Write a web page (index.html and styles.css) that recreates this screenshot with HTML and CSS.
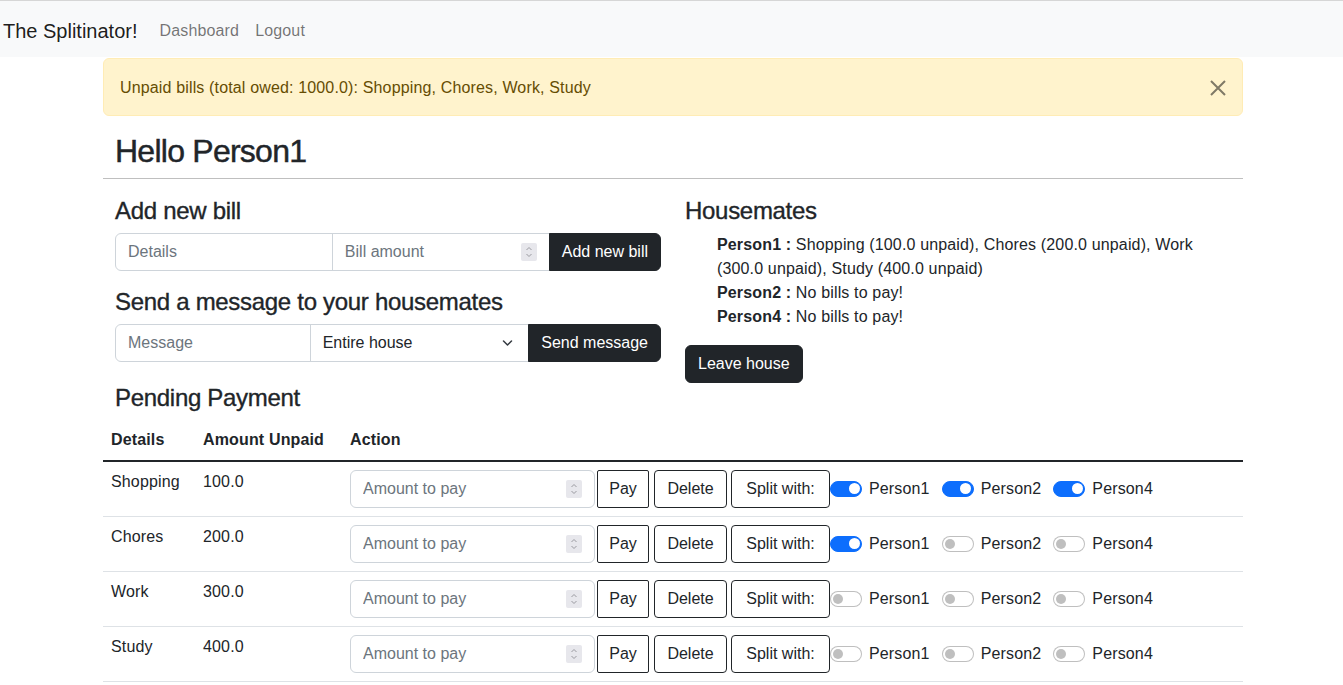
FILE: index.html
```html
<!DOCTYPE html>
<html lang="en">
<head>
<meta charset="utf-8">
<title>The Splitinator!</title>
<link rel="stylesheet" href="styles.css">
</head>
<body>
<nav class="navbar">
  <a class="brand" href="#">The Splitinator!</a>
  <a class="nav-link" href="#">Dashboard</a>
  <a class="nav-link" href="#">Logout</a>
</nav>
<main class="container">
  <div class="alert">
    <span>Unpaid bills (total owed: 1000.0): Shopping, Chores, Work, Study</span>
    <button class="btn-close" type="button" aria-label="Close">
      <svg width="16" height="16" viewBox="0 0 16 16"><path d="M1 1L15 15M15 1L1 15" stroke="currentColor" stroke-width="2"/></svg>
    </button>
  </div>
  <h2 class="hello">Hello Person1</h2>
  <hr class="divider">
  <div class="row">
    <div class="col">
      <h4 class="sub">Add new bill</h4>
      <form class="input-group">
        <input class="form-control" type="text" placeholder="Details">
        <div class="form-control num-wrap">
          <input class="num" type="number" placeholder="Bill amount">
          <span class="spin"><svg width="16" height="18" viewBox="0 0 16 18"><rect width="16" height="18" rx="2" fill="#e7e7ec"/><path d="M5.5 7L8 4.5L10.5 7M5.5 11L8 13.5L10.5 11" fill="none" stroke="#9a9aa0" stroke-width="1"/></svg></span>
        </div>
        <button class="btn btn-dark" type="button">Add new bill</button>
      </form>
      <h4 class="sub">Send a message to your housemates</h4>
      <form class="input-group">
        <input class="form-control" type="text" placeholder="Message">
        <select class="form-select"><option>Entire house</option></select>
        <button class="btn btn-dark" type="button">Send message</button>
      </form>
    </div>
    <div class="col">
      <h4 class="sub">Housemates</h4>
      <ul class="mates">
        <li><b>Person1 :</b> Shopping (100.0 unpaid), Chores (200.0 unpaid), Work (300.0 unpaid), Study (400.0 unpaid)</li>
        <li><b>Person2 :</b> No bills to pay!</li>
        <li><b>Person4 :</b> No bills to pay!</li>
      </ul>
      <button class="btn btn-dark" type="button">Leave house</button>
    </div>
  </div>
  <h4 class="sub pending">Pending Payment</h4>
  <table class="table">
    <thead>
      <tr><th class="c-details">Details</th><th class="c-amount">Amount Unpaid</th><th>Action</th></tr>
    </thead>
    <tbody>
      <tr>
        <td>Shopping</td><td>100.0</td>
        <td><div class="action">
          <div class="form-control num-wrap pay-input"><input class="num" type="number" placeholder="Amount to pay"><span class="spin"><svg width="16" height="18" viewBox="0 0 16 18"><rect width="16" height="18" rx="2" fill="#e7e7ec"/><path d="M5.5 7L8 4.5L10.5 7M5.5 11L8 13.5L10.5 11" fill="none" stroke="#9a9aa0" stroke-width="1"/></svg></span></div>
          <button class="btn btn-outline b-pay" type="button">Pay</button>
          <button class="btn btn-outline b-del" type="button">Delete</button>
          <button class="btn btn-outline b-split" type="button">Split with:</button>
          <label class="check"><span class="switch on"></span>Person1</label>
          <label class="check"><span class="switch on"></span>Person2</label>
          <label class="check"><span class="switch on"></span>Person4</label>
        </div></td>
      </tr>
      <tr>
        <td>Chores</td><td>200.0</td>
        <td><div class="action">
          <div class="form-control num-wrap pay-input"><input class="num" type="number" placeholder="Amount to pay"><span class="spin"><svg width="16" height="18" viewBox="0 0 16 18"><rect width="16" height="18" rx="2" fill="#e7e7ec"/><path d="M5.5 7L8 4.5L10.5 7M5.5 11L8 13.5L10.5 11" fill="none" stroke="#9a9aa0" stroke-width="1"/></svg></span></div>
          <button class="btn btn-outline b-pay" type="button">Pay</button>
          <button class="btn btn-outline b-del" type="button">Delete</button>
          <button class="btn btn-outline b-split" type="button">Split with:</button>
          <label class="check"><span class="switch on"></span>Person1</label>
          <label class="check"><span class="switch"></span>Person2</label>
          <label class="check"><span class="switch"></span>Person4</label>
        </div></td>
      </tr>
      <tr>
        <td>Work</td><td>300.0</td>
        <td><div class="action">
          <div class="form-control num-wrap pay-input"><input class="num" type="number" placeholder="Amount to pay"><span class="spin"><svg width="16" height="18" viewBox="0 0 16 18"><rect width="16" height="18" rx="2" fill="#e7e7ec"/><path d="M5.5 7L8 4.5L10.5 7M5.5 11L8 13.5L10.5 11" fill="none" stroke="#9a9aa0" stroke-width="1"/></svg></span></div>
          <button class="btn btn-outline b-pay" type="button">Pay</button>
          <button class="btn btn-outline b-del" type="button">Delete</button>
          <button class="btn btn-outline b-split" type="button">Split with:</button>
          <label class="check"><span class="switch"></span>Person1</label>
          <label class="check"><span class="switch"></span>Person2</label>
          <label class="check"><span class="switch"></span>Person4</label>
        </div></td>
      </tr>
      <tr>
        <td>Study</td><td>400.0</td>
        <td><div class="action">
          <div class="form-control num-wrap pay-input"><input class="num" type="number" placeholder="Amount to pay"><span class="spin"><svg width="16" height="18" viewBox="0 0 16 18"><rect width="16" height="18" rx="2" fill="#e7e7ec"/><path d="M5.5 7L8 4.5L10.5 7M5.5 11L8 13.5L10.5 11" fill="none" stroke="#9a9aa0" stroke-width="1"/></svg></span></div>
          <button class="btn btn-outline b-pay" type="button">Pay</button>
          <button class="btn btn-outline b-del" type="button">Delete</button>
          <button class="btn btn-outline b-split" type="button">Split with:</button>
          <label class="check"><span class="switch"></span>Person1</label>
          <label class="check"><span class="switch"></span>Person2</label>
          <label class="check"><span class="switch"></span>Person4</label>
        </div></td>
      </tr>
    </tbody>
  </table>
</main>
</body>
</html>
```
FILE: styles.css
```css
* { box-sizing: border-box; }
html, body { margin: 0; padding: 0; }
body {
  font-family: "Liberation Sans", Arial, sans-serif;
  font-size: 16px;
  line-height: 1.5;
  color: #212529;
  background: #fff;
  letter-spacing: 0.15px;
}

/* navbar */
.navbar {
  display: flex;
  align-items: center;
  height: 57px;
  border-top: 1px solid #d6d6d6;
  background: #f8f9fa;
  padding: 3px 3px 0;
}
.brand {
  font-size: 20px;
  line-height: 30px;
  color: rgba(0,0,0,.9);
  text-decoration: none;
  margin-right: 14px;
  letter-spacing: 0;
}
.nav-link {
  color: rgba(0,0,0,.55);
  text-decoration: none;
  padding: 8px;
}

/* container */
.container {
  width: 1140px;
  margin: 1px 100px 0 103px;
}

.alert {
  display: flex;
  align-items: center;
  justify-content: space-between;
  background: #fff3cd;
  border: 1px solid #ffecb5;
  color: #664d03;
  border-radius: 6px;
  padding: 17px 16px 15px 16px;
  margin-bottom: 16px;
}
.btn-close {
  border: 0;
  background: transparent;
  color: rgba(0,0,0,.5);
  padding: 0;
  width: 16px;
  height: 16px;
  margin-right: 0;
  display: flex;
}

.hello {
  font-size: 32px;
  font-weight: 500;
  line-height: 1.2;
  margin: 0 0 8px;
  padding: 0 12px;
  letter-spacing: -0.75px;
  -webkit-text-stroke: 0.45px currentColor;
}
.divider {
  margin: 0 0 16px;
  border: 0;
  border-top: 1px solid rgba(0,0,0,.25);
}

.row {
  display: grid;
  grid-template-columns: 570px 570px;
}
.col { padding: 0 12px; }

.sub {
  font-size: 24px;
  font-weight: 500;
  line-height: 1.2;
  margin: 2px 0 7px;
  letter-spacing: -0.3px;
  -webkit-text-stroke: 0.35px currentColor;
}
.col .sub + .input-group + .sub { margin-top: 17px; }

.input-group {
  display: flex;
  align-items: stretch;
  margin: 0;
}
.form-control, .form-select {
  flex: 1 1 auto;
  width: 1%;
  min-width: 0;
  height: 38px;
  font: inherit;
  color: #212529;
  padding: 6px 12px;
  border: 1px solid #ced4da;
  background: #fff;
  border-radius: 0;
  outline: none;
}
.form-control::placeholder, .num::placeholder { color: #6c757d; opacity: 1; }
.input-group > :first-child { border-radius: 6px 0 0 6px; }
.input-group > :not(:first-child) { margin-left: -1px; }
.input-group > :last-child { border-radius: 0 6px 6px 0; }

.num-wrap {
  display: flex;
  align-items: center;
  padding: 0 12px;
}
.num {
  flex: 1;
  min-width: 0;
  border: 0;
  outline: none;
  font: inherit;
  padding: 0;
  background: transparent;
  -moz-appearance: textfield;
}
.num::-webkit-inner-spin-button, .num::-webkit-outer-spin-button { -webkit-appearance: none; margin: 0; }
.spin { display: flex; flex: none; }

.form-select {
  appearance: none;
  -webkit-appearance: none;
  padding-right: 36px;
  background-image: url("data:image/svg+xml,%3csvg xmlns='http://www.w3.org/2000/svg' viewBox='0 0 10 6'%3e%3cpath fill='none' stroke='%23343a40' stroke-width='1.5' stroke-linecap='round' stroke-linejoin='round' d='M1 1l4 4 4-4'/%3e%3c/svg%3e");
  background-repeat: no-repeat;
  background-position: right 15px center;
  background-size: 11px 6px;
}

.btn {
  font: inherit;
  line-height: 24px;
  padding: 6px 12px;
  border: 1px solid transparent;
  border-radius: 6px;
  cursor: pointer;
  white-space: nowrap;
}
.btn-dark {
  background: #212529;
  border-color: #212529;
  color: #fff;
}

.mates {
  list-style: none;
  margin: 0 0 16px;
  padding-left: 32px;
}

.pending { padding: 0 12px; margin: 1px 0 7px; }

/* table */
.table {
  width: 100%;
  border-collapse: collapse;
}
.table th {
  text-align: left;
  font-weight: 700;
  padding: 8px;
  border-bottom: 2px solid #212529;
}
.table td {
  padding: 8px;
  vertical-align: top;
  border-bottom: 1px solid #dee2e6;
}
.c-details { width: 92px; }
.c-amount { width: 147px; }

.action {
  display: flex;
  align-items: center;
}
.pay-input {
  flex: none;
  width: 245px;
  border-radius: 6px;
  margin-right: 2px;
}
.btn-outline {
  background: #fff;
  border-color: #212529;
  color: #212529;
  height: 38px;
  padding: 6px 0;
  text-align: center;
  flex: none;
}
.b-pay { width: 52px; border-radius: 2px; margin-right: 5px; }
.b-del { width: 73px; border-radius: 4px; margin-right: 4px; }
.b-split { width: 99px; border-radius: 4px; }

.check {
  display: inline-flex;
  align-items: center;
  margin-right: 12px;
}
.switch {
  position: relative;
  width: 32px;
  height: 16px;
  border-radius: 8px;
  border: 1px solid rgba(0,0,0,.25);
  background: #fff;
  margin-right: 7px;
  flex: none;
}
.switch::after {
  content: "";
  position: absolute;
  top: 2px;
  left: 2px;
  width: 10px;
  height: 10px;
  border-radius: 50%;
  background: #bfbfbf;
}
.switch.on {
  background: #0d6efd;
  border-color: #0d6efd;
}
.switch.on::after {
  top: 1.5px;
  left: auto;
  right: 1.5px;
  width: 11px;
  height: 11px;
  background: #fff;
}
```
